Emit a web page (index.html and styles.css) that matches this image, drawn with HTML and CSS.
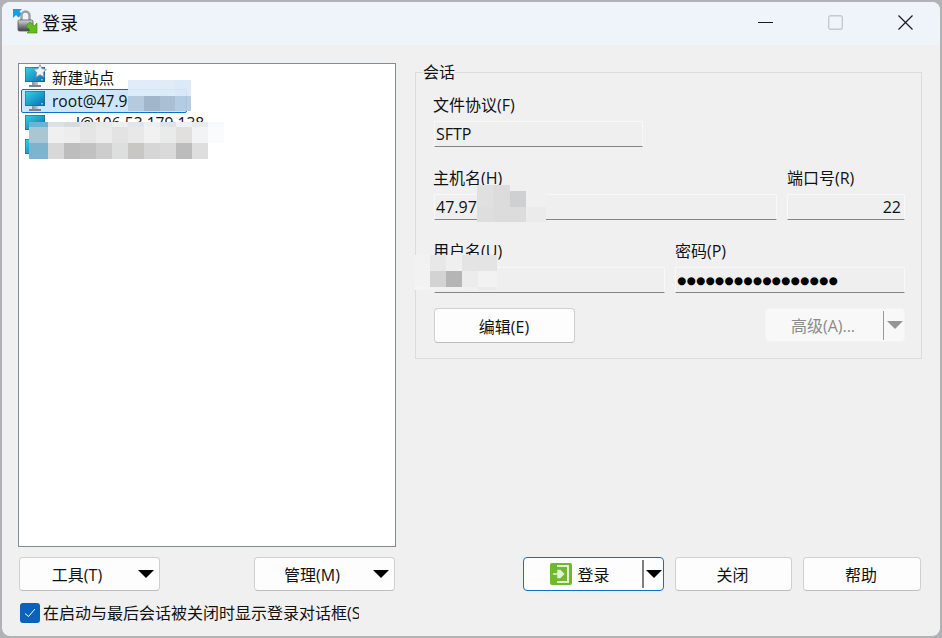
FILE: index.html
```html
<!DOCTYPE html>
<html lang="zh">
<head>
<meta charset="utf-8">
<title>登录</title>
<link rel="stylesheet" href="styles.css">
</head>
<body>
<svg class="sprite" width="0" height="0">
  <defs>
    <linearGradient id="scr" x1="0" y1="0" x2="1" y2="1"><stop offset="0" stop-color="#35d2e0"/><stop offset="1" stop-color="#0a6cb8"/></linearGradient>
    <linearGradient id="stand" x1="0" y1="0" x2="1" y2="0"><stop offset="0" stop-color="#8a9096"/><stop offset="1" stop-color="#c5c9cc"/></linearGradient>
    <linearGradient id="lockb" x1="0" y1="0" x2="0" y2="1"><stop offset="0" stop-color="#d8dadc"/><stop offset=".45" stop-color="#8b8f93"/><stop offset="1" stop-color="#3f4246"/></linearGradient>
    <symbol id="monitor" viewBox="0 0 22 22">
      <rect x="1" y="1" width="20" height="15" fill="#2d5a78"/>
      <rect x="1.500" y="1.500" width="19" height="14" fill="url(#scr)"/>
      <rect x="17" y="13" width="2" height="1.500" fill="#5fe06a"/>
      <rect x="8" y="16" width="6" height="3" fill="url(#stand)"/>
      <rect x="5" y="19" width="12" height="2" fill="#7d8388"/>
    </symbol>
  </defs>
</svg>
<div class="window">
  <header class="titlebar">
    <div class="title-left">
      <svg class="app-icon" width="26" height="26" viewBox="0 0 26 26">
        <path d="M1 1h9L7.500 3.500 10 6 6.500 9.500 4 7 1 10z" fill="#1f9be6"/>
        <path d="M9.500 12V7.500a4 4 0 0 1 8 0V12" fill="none" stroke="#9a9fa4" stroke-width="2.400"/>
        <rect x="6" y="12" width="15" height="11" rx="1.500" fill="url(#lockb)" stroke="#55595e" stroke-width=".8"/>
        <path d="M25 25H15l3-3-4-4 4-4 4 4 3-3z" fill="#62bd1f" stroke="#3d8f10" stroke-width=".6"/>
      </svg>
      <span class="title-text">登录</span>
    </div>
    <div class="win-controls">
      <svg class="ctl" width="15" height="15" viewBox="0 0 15 15"><path d="M0 7.500h15" stroke="#1a1a1a" fill="none"/></svg>
      <svg class="ctl" width="15" height="15" viewBox="0 0 15 15"><rect x=".7" y=".7" width="13.600" height="13.600" rx="2" fill="none" stroke="#c6c9ce" stroke-width="1.400"/></svg>
      <svg class="ctl" width="15" height="15" viewBox="0 0 15 15"><path d="M.5.500l14 14M14.500.500l-14 14" stroke="#1a1a1a" stroke-width="1.200" fill="none"/></svg>
    </div>
  </header>
  <main class="content">
    <section class="left">
      <div class="tree">
        <div class="tree-row">
          <span class="tree-icon">
            <svg width="22" height="22"><use href="#monitor"/></svg>
            <svg class="star" width="14" height="14" viewBox="0 0 24 24"><path d="M12 1l3.400 7.200 7.600 1-5.600 5.300 1.500 7.800L12 18.500l-6.900 3.800 1.500-7.800L1 9.200l7.600-1z" fill="#f2f3f5" stroke="#8d949b" stroke-width="1.500"/></svg>
          </span>
          <span>新建站点</span>
        </div>
        <div class="tree-row selected">
          <span class="tree-icon"><svg width="22" height="22"><use href="#monitor"/></svg></span>
          <span>root@47.9</span>
        </div>
        <div class="tree-row">
          <span class="tree-icon"><svg width="22" height="22"><use href="#monitor"/></svg></span>
          <span class="row-clip">l@106.53.179.138</span>
        </div>
        <div class="tree-row">
          <span class="tree-icon"><svg width="22" height="22"><use href="#monitor"/></svg></span>
        </div>
        <div class="mosaic m-root">
          <i class="c" style="background:#dfecf9"></i><i class="c" style="background:#dfecf9"></i><i class="c" style="background:#deebf8"></i><i class="c" style="background:#dbe8f6"></i>
          <i class="c" style="background:#b4c8de"></i><i class="c" style="background:#9fb3c9"></i><i class="c" style="background:#a9bdcf"></i><i class="c" style="background:#b3cbe2"></i>
        </div>
        <div class="mosaic m-rows">
          <i class="c" style="background:#6db3d4"></i><i class="c" style="background:#dbe2e6"></i><i class="c" style="background:#d5dbde"></i><i class="c" style="background:#e0e4e6"></i><i class="c" style="background:#e6e9ea"></i><i class="c" style="background:#eceeef"></i><i class="c" style="background:#e3e6e8"></i><i class="c" style="background:#edf0f1"></i><i class="c" style="background:#dfe3e5"></i><i class="c" style="background:#eef1f3"></i><i class="c" style="background:#e9ecee"></i><i class="c" style="background:#f7f9fb"></i>
          <i class="c" style="background:#a9c6d3"></i><i class="c" style="background:#f0f0f0"></i><i class="c" style="background:#ededed"></i><i class="c" style="background:#e5e5e5"></i><i class="c" style="background:#ebebeb"></i><i class="c" style="background:#e3e3e3"></i><i class="c" style="background:#e8e8e8"></i><i class="c" style="background:#f1f1f1"></i><i class="c" style="background:#e9ebeb"></i><i class="c" style="background:#e2e0de"></i><i class="c" style="background:#f2f3f5"></i><i class="c" style="background:#fafbfd"></i>
          <i class="c" style="background:#7db3cd"></i><i class="c" style="background:#d8d8d8"></i><i class="c" style="background:#bdbdbd"></i><i class="c" style="background:#c1c1c1"></i><i class="c" style="background:#cdcdcd"></i><i class="c" style="background:#dcdfdd"></i><i class="c" style="background:#c8c7c4"></i><i class="c" style="background:#d6d6d6"></i><i class="c" style="background:#dadada"></i><i class="c" style="background:#bcbcbc"></i><i class="c" style="background:#dedede"></i><i class="c" style="background:#fff"></i>
        </div>
      </div>
      <div class="left-buttons">
        <button class="btn btn-menu"><span>工具(T)</span><i class="caret"></i></button>
        <button class="btn btn-menu"><span>管理(M)</span><i class="caret"></i></button>
      </div>
      <label class="check-row">
        <span class="check">
          <svg width="12" height="10" viewBox="0 0 12 10"><path d="M1 5.500l3.500 3L11 1" fill="none" stroke="#fff" stroke-width="1"/></svg>
        </span>
        <span class="check-text">在启动与最后会话被关闭时显示登录对话框(S)</span>
      </label>
    </section>
    <section class="right">
      <fieldset class="group">
        <legend class="legend">会话</legend>
        <div class="field-row">
          <div class="field w-protocol">
            <label class="label">文件协议(F)</label>
            <div class="input">SFTP</div>
          </div>
        </div>
        <div class="field-row">
          <div class="field w-host">
            <label class="label">主机名(H)</label>
            <div class="input">47.97</div>
            <div class="mosaic m-host">
              <i class="c" style="background:#e0e0e0"></i><i class="c" style="background:#dcdcdc"></i><i class="c"></i><i class="c"></i>
              <i class="c" style="background:#e0e0e0"></i><i class="c" style="background:#dcdcdc"></i><i class="c" style="background:#cfd0d2"></i><i class="c" style="background:#f0f0f0"></i>
              <i class="c" style="background:#dedede"></i><i class="c" style="background:#dcdcdc"></i><i class="c" style="background:#dcdcdc"></i><i class="c" style="background:#ebebeb"></i>
            </div>
          </div>
          <div class="field w-port">
            <label class="label">端口号(R)</label>
            <div class="input right-text">22</div>
          </div>
        </div>
        <div class="field-row">
          <div class="field w-user">
            <label class="label">用户名(U)</label>
            <div class="input"></div>
            <div class="mosaic m-user">
              <i class="c" style="background:#f2f2f2"></i><i class="c" style="background:#e8e8e8"></i><i class="c" style="background:#efefef"></i><i class="c" style="background:#e4e4e4"></i><i class="c" style="background:#e4e4e4"></i>
              <i class="c" style="background:#f2f2f2"></i><i class="c" style="background:#d3d3d3"></i><i class="c" style="background:#b5b5b5"></i><i class="c" style="background:#ececec"></i><i class="c" style="background:#f2f2f2"></i>
              <i class="c" style="background:#f4f4f4"></i><i class="c" style="background:#f2f2f2"></i><i class="c" style="background:#f2f2f2"></i><i class="c" style="background:#f0f0f0"></i><i class="c" style="background:#ebebeb"></i>
            </div>
          </div>
          <div class="field w-pass">
            <label class="label">密码(P)</label>
            <div class="input dots">●●●●●●●●●●●●●●●●●</div>
          </div>
        </div>
        <div class="group-actions">
          <button class="btn btn-edit">编辑(E)</button>
          <button class="btn btn-adv" disabled>
            <span class="adv-label">高级(A)...</span>
            <i class="adv-sep"></i>
            <i class="caret caret-grey"></i>
          </button>
        </div>
      </fieldset>
      <div class="dialog-buttons">
        <button class="btn btn-login">
          <span class="login-main">
            <svg width="22" height="22" viewBox="0 0 22 22">
              <rect width="22" height="22" rx="2" fill="#6fb92c"/>
              <path d="M7 3h11v16H7" fill="none" stroke="#e4f2d3" stroke-width="2"/>
              <path d="M3 11h7M8 7.500h2l3.500 3.500L10 14.500H8z" fill="#e4f2d3" stroke="#e4f2d3" stroke-width="1.500"/>
            </svg>
            <span>登录</span>
          </span>
          <i class="login-sep"></i>
          <i class="caret"></i>
        </button>
        <button class="btn btn-close">关闭</button>
        <button class="btn btn-help">帮助</button>
      </div>
    </section>
  </main>
</div>
</body>
</html>
```

FILE: styles.css
```css
* { box-sizing: border-box; }
html, body { margin: 0; height: 100%; }
body {
  width: 942px;
  height: 638px;
  overflow: hidden;
  background: #b0b2b5;
  padding: 2px;
  font-family: "Open Sans", "Noto Sans CJK SC", sans-serif;
  font-size: 16px;
  color: #111;
}
.sprite { position: absolute; }
.window {
  width: 938px;
  height: 634px;
  background: #f0f0f0;
  border-radius: 8px;
  overflow: hidden;
  display: flex;
  flex-direction: column;
}
.titlebar {
  height: 43px;
  flex: none;
  background: #eff3fa;
  display: flex;
  align-items: center;
  justify-content: space-between;
}
.title-left { display: flex; align-items: center; gap: 4px; padding-left: 10px; margin-top: -1px; }
.app-icon { display: block; margin-top: -5px; }
.title-text { font-size: 18px; line-height: 24px; }
.win-controls { display: flex; gap: 55px; padding-right: 27px; align-items: center; margin-top: -2px; }
.ctl { display: block; }
.content { flex: 1; display: flex; padding: 18px 17px 0 16px; gap: 19px; }
.left { width: 378px; flex: none; display: flex; flex-direction: column; }
.tree {
  position: relative;
  height: 484px;
  background: #fff;
  border: 1px solid #868a91;
  padding: 1px 0 0 2px;
}
.tree-row {
  height: 24px;
  width: 166px;
  display: flex;
  align-items: center;
  gap: 6px;
  padding-left: 2px;
  border: 1px solid transparent;
  font-size: 15.600px;
  white-space: nowrap;
}
.tree-row.selected {
  background: #cde6fb;
  border-color: #0b72cc;
  border-radius: 2px;
}
.tree-icon { position: relative; width: 22px; height: 22px; flex: none; }
.tree-icon svg { display: block; }
.tree-icon .star { position: absolute; top: -2px; right: -1px; }
.row-clip { position: relative; top: -2px; padding-left: 24px; }
.mosaic { position: absolute; display: grid; }
.c { display: block; }
.m-root { left: 109px; top: 16px; width: 63px; height: 31px; grid-template-columns: repeat(4, 1fr); grid-template-rows: 16px 15px; opacity: .95; }
.m-rows { left: 10px; top: 58px; width: 195px; height: 37px; grid-template-columns: 19px repeat(11, 1fr); grid-template-rows: 5px 16px 16px; }
.left-buttons { display: flex; justify-content: space-between; padding: 10px 1px 0 1px; }
.btn {
  font: inherit;
  color: #111;
  background: #fdfdfd;
  border: 1px solid #d0d0d0;
  border-bottom-color: #bdbdbd;
  border-radius: 4px;
  height: 34px;
  padding: 0;
}
.btn-menu { width: 141px; display: flex; align-items: center; justify-content: center; position: relative; padding-right: 25px; }
.caret { width: 0; height: 0; border-left: 8px solid transparent; border-right: 8px solid transparent; border-top: 8px solid #000; display: block; }
.btn-menu .caret { position: absolute; right: 5px; top: 12px; }
.check-row { display: flex; align-items: center; gap: 3px; margin-top: 12px; padding-left: 2px; }
.check { width: 20px; height: 20px; border-radius: 3px; background: #0b62bd; display: flex; align-items: center; justify-content: center; flex: none; }
.check-text { width: 316px; overflow: hidden; white-space: nowrap; line-height: 20px; }
.right { width: 507px; flex: none; display: flex; flex-direction: column; }
.group {
  margin: 0;
  min-inline-size: 0;
  height: 296px;
  border: 1px solid #dcdcdc;
  padding: 0 16px 0 18px;
}
.legend { padding: 0; margin-left: -11px; line-height: 18px; background: #f0f0f0; }
.field-row { display: flex; gap: 10px; margin-top: 22px; justify-content: space-between; }
.legend + .field-row { margin-top: 15px; }
.field { position: relative; }
.label { display: block; height: 18px; line-height: 18px; margin-left: -1px; margin-bottom: 7px; white-space: nowrap; }
.field + .field .label { margin-left: 0; }
.input {
  height: 26px;
  background: #efefef;
  border: 1px solid #f8f8f8;
  border-bottom: 1px solid #858585;
  padding-left: 1px;
  line-height: 24px;
  white-space: nowrap;
  overflow: hidden;
}
.right-text { text-align: right; padding-right: 3px; }
.dots { font-size: 10.500px; letter-spacing: .3px; font-family: "DejaVu Sans", sans-serif; color: #000; }
.w-protocol { width: 209px; }
.w-host { width: 343px; }
.w-port { width: 118px; }
.w-user { width: 231px; }
.w-pass { width: 230px; }
.m-host { left: 43px; top: 16px; width: 69px; height: 37px; grid-template-columns: 16px 17px 16px 20px; grid-template-rows: 6px 16px 15px; }
.m-user { left: -19px; top: 13px; width: 82px; height: 35px; grid-template-columns: 15px 16px 16px 16px 19px; grid-template-rows: 16px 16px 3px; }
.group-actions { display: flex; justify-content: space-between; margin-top: 15px; }
.btn-edit { width: 141px; height: 35px; padding-right: 1px; }
.btn-adv { width: 140px; background: #f8f8f8; color: #8b8b8b; border-color: #f4f4f4; display: flex; align-items: center; position: relative; }
.adv-label { width: 117px; text-align: center; padding-right: 3px; }
.adv-sep { width: 1px; height: 29px; background: #9a9a9a; flex: none; }
.caret-grey { border-top-color: #959595; margin-left: 3px; }
.dialog-buttons { display: flex; margin-top: 198px; gap: 11px; padding-left: 108px; }
.btn-login { width: 141px; border-color: #0b72cc; display: flex; align-items: center; }
.login-main { display: flex; align-items: center; justify-content: center; gap: 5px; width: 118px; padding-right: 6px; }
.login-main svg { display: block; }
.login-sep { width: 2px; height: 28px; background: #7f7f7f; flex: none; }
.btn-login .caret { margin-left: 2px; }
.btn-close { width: 117px; padding-right: 2px; }
.btn-help { width: 118px; padding-right: 2px; }
```
